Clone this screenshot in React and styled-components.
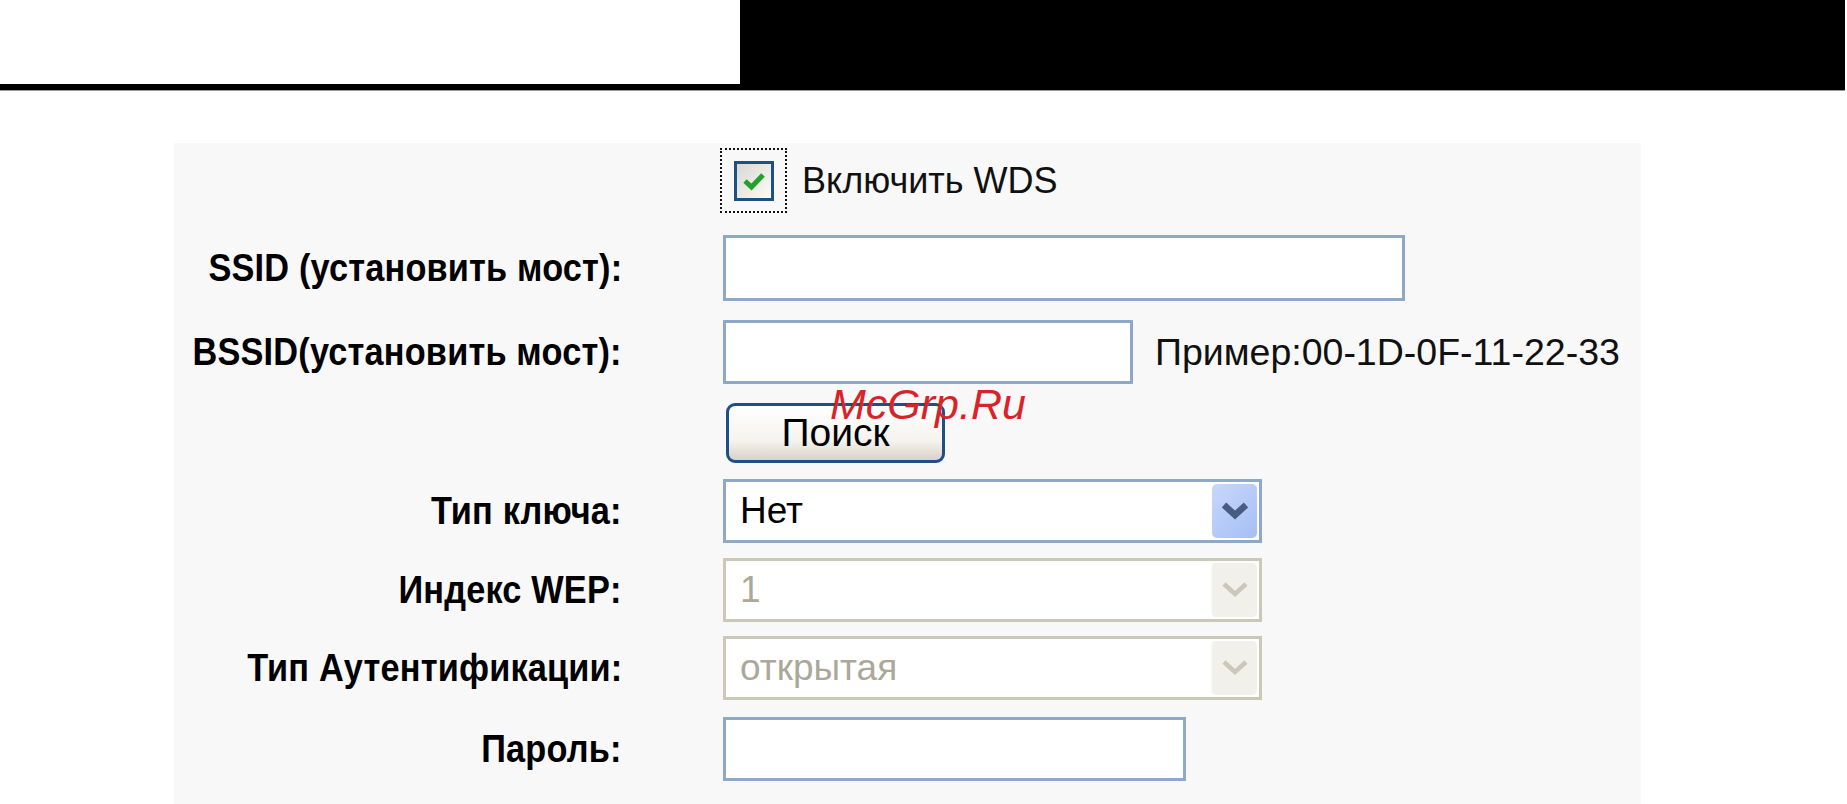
import React from "react";
import styled, { createGlobalStyle } from "styled-components";

const GlobalStyle = createGlobalStyle`
  html, body {
    margin: 0;
    padding: 0;
    background: #fff;
  }
  body {
    font-family: "Liberation Sans", Arial, sans-serif;
    width: 1847px;
    height: 804px;
    overflow: hidden;
  }
`;

const Page = styled.div`
  position: relative;
  width: 1847px;
  height: 804px;
`;

const Header = styled.div`
  display: flex;
  width: 1845px;
  height: 91px;
`;

const HeaderLeft = styled.div`
  width: 740px;
  display: flex;
  flex-direction: column;
  justify-content: flex-end;
`;

const HeaderRule = styled.div`
  height: 6px;
  background: #000;
  border-bottom: 1px solid #9a9a9a;
`;

const HeaderBlock = styled.div`
  flex: 1;
  background: #000;
  border-bottom: 1px solid #9a9a9a;
`;

const Panel = styled.div`
  margin: 52px 0 0 174px;
  width: 1467px;
  height: 661px;
  box-sizing: border-box;
  padding-top: 5px;
  background: #f8f8f8;
  display: flex;
  flex-direction: column;
`;

const Row = styled.div`
  display: flex;
  align-items: center;
  height: ${(p) => p.$h}px;
  margin-top: ${(p) => p.$mt || 0}px;
`;

const Label = styled.div`
  width: 448px;
  flex-shrink: 0;
  display: flex;
  justify-content: flex-end;
  white-space: nowrap;
`;

const LabelText = styled.span`
  flex-shrink: 0;
  font-weight: bold;
  font-size: 39px;
  letter-spacing: 0.2px;
  color: #000;
  transform: scaleX(0.88);
  transform-origin: right center;
`;

const Field = styled.div`
  display: flex;
  align-items: center;
  margin-left: ${(p) => p.$offset ?? 101}px;
`;

const FocusBox = styled.div`
  width: 67px;
  height: 65px;
  box-sizing: border-box;
  border: 2px dotted #111;
  display: flex;
  align-items: center;
  justify-content: center;
`;

const CheckBox = styled.div`
  width: 40px;
  height: 40px;
  box-sizing: border-box;
  border: 3px solid #1c5180;
  background: linear-gradient(135deg, #d9d9d2, #fbfbf8);
  display: flex;
  align-items: center;
  justify-content: center;
`;

const CheckText = styled.span`
  margin-left: 15px;
  font-size: 36px;
  color: #111;
`;

const TextInput = styled.input`
  width: ${(p) => p.$w}px;
  height: ${(p) => p.$h || 64}px;
  box-sizing: border-box;
  border: 3px solid #8ea8c8;
  background: #fff;
  outline: none;
  margin: 0;
  font-family: inherit;
  font-size: 35px;
`;

const Hint = styled.span`
  margin-left: 22px;
  font-size: 37.5px;
  color: #111;
  white-space: nowrap;
`;

const Button = styled.button`
  width: 219px;
  height: 60px;
  margin: 0 0 0 3px;
  box-sizing: border-box;
  border: 3px solid #1f4f86;
  border-radius: 9px;
  background: linear-gradient(#ffffff, #f4f3ee 65%, #d8d2c6);
  font-family: inherit;
  font-size: 39px;
  color: #000;
  padding: 0;
`;

const Select = styled.div`
  width: 539px;
  height: 64px;
  box-sizing: border-box;
  border: 3px solid ${(p) => (p.$disabled ? "#cbc8b8" : "#8ea8c8")};
  padding: 2px;
  display: flex;
  background: #fff;
`;

const SelectValue = styled.div`
  flex: 1;
  display: flex;
  align-items: center;
  padding-left: 12px;
  font-size: 37px;
  color: ${(p) => (p.$disabled ? "#aca899" : "#000")};
`;

const SelectArrow = styled.div`
  width: 45px;
  border-radius: 5px;
  background: ${(p) =>
    p.$disabled ? "#f1f0ea" : "linear-gradient(135deg, #c8d8fc, #a6bef4)"};
  border-left: ${(p) => (p.$disabled ? "2px solid #fbfbf7" : "none")};
  display: flex;
  align-items: center;
  justify-content: center;
`;

const Watermark = styled.div`
  position: absolute;
  left: 830px;
  top: 383px;
  font-size: 43px;
  font-style: italic;
  line-height: 1;
  color: #d9232a;
  white-space: nowrap;
`;

const Chevron = ({ disabled }) => (
  <svg width="30" height="20" viewBox="0 0 30 20">
    <path
      d="M4 4 L15 14 L26 4"
      fill="none"
      stroke={disabled ? "#cac8bb" : "#485c82"}
      strokeWidth={disabled ? 4.5 : 6.5}
    />
  </svg>
);

const SelectBox = ({ value, disabled }) => (
  <Select $disabled={disabled}>
    <SelectValue $disabled={disabled}>{value}</SelectValue>
    <SelectArrow $disabled={disabled}>
      <Chevron disabled={disabled} />
    </SelectArrow>
  </Select>
);

const FormRow = ({ label, h, mt, children }) => (
  <Row $h={h} $mt={mt}>
    <Label>{label && <LabelText>{label}</LabelText>}</Label>
    {children}
  </Row>
);

const App = () => {
  return (
    <Page>
      <GlobalStyle />
      <Header>
        <HeaderLeft>
          <HeaderRule />
        </HeaderLeft>
        <HeaderBlock />
      </Header>
      <Panel>
        <FormRow h={65}>
          <Field $offset={98}>
            <FocusBox>
              <CheckBox>
                <svg width="28" height="28" viewBox="0 0 28 28">
                  <path
                    d="M5 14 L11.5 20 L23 8"
                    fill="none"
                    stroke="#23a12b"
                    strokeWidth="5"
                  />
                </svg>
              </CheckBox>
            </FocusBox>
            <CheckText>Включить WDS</CheckText>
          </Field>
        </FormRow>
        <FormRow label="SSID (установить мост):" h={66} mt={22}>
          <Field>
            <TextInput $w={682} $h={66} />
          </Field>
        </FormRow>
        <FormRow label="BSSID(установить мост):" h={64} mt={19}>
          <Field>
            <TextInput $w={410} />
            <Hint>Пример:00-1D-0F-11-22-33</Hint>
          </Field>
        </FormRow>
        <FormRow h={60} mt={19}>
          <Field>
            <Button>Поиск</Button>
          </Field>
        </FormRow>
        <FormRow label="Тип ключа:" h={64} mt={16}>
          <Field>
            <SelectBox value="Нет" />
          </Field>
        </FormRow>
        <FormRow label="Индекс WEP:" h={65} mt={14}>
          <Field>
            <SelectBox value="1" disabled />
          </Field>
        </FormRow>
        <FormRow label="Тип Аутентификации:" h={65} mt={13}>
          <Field>
            <SelectBox value="открытая" disabled />
          </Field>
        </FormRow>
        <FormRow label="Пароль:" h={64} mt={17}>
          <Field>
            <TextInput $w={463} />
          </Field>
        </FormRow>
      </Panel>
      <Watermark>McGrp.Ru</Watermark>
    </Page>
  );
};

export default App;
